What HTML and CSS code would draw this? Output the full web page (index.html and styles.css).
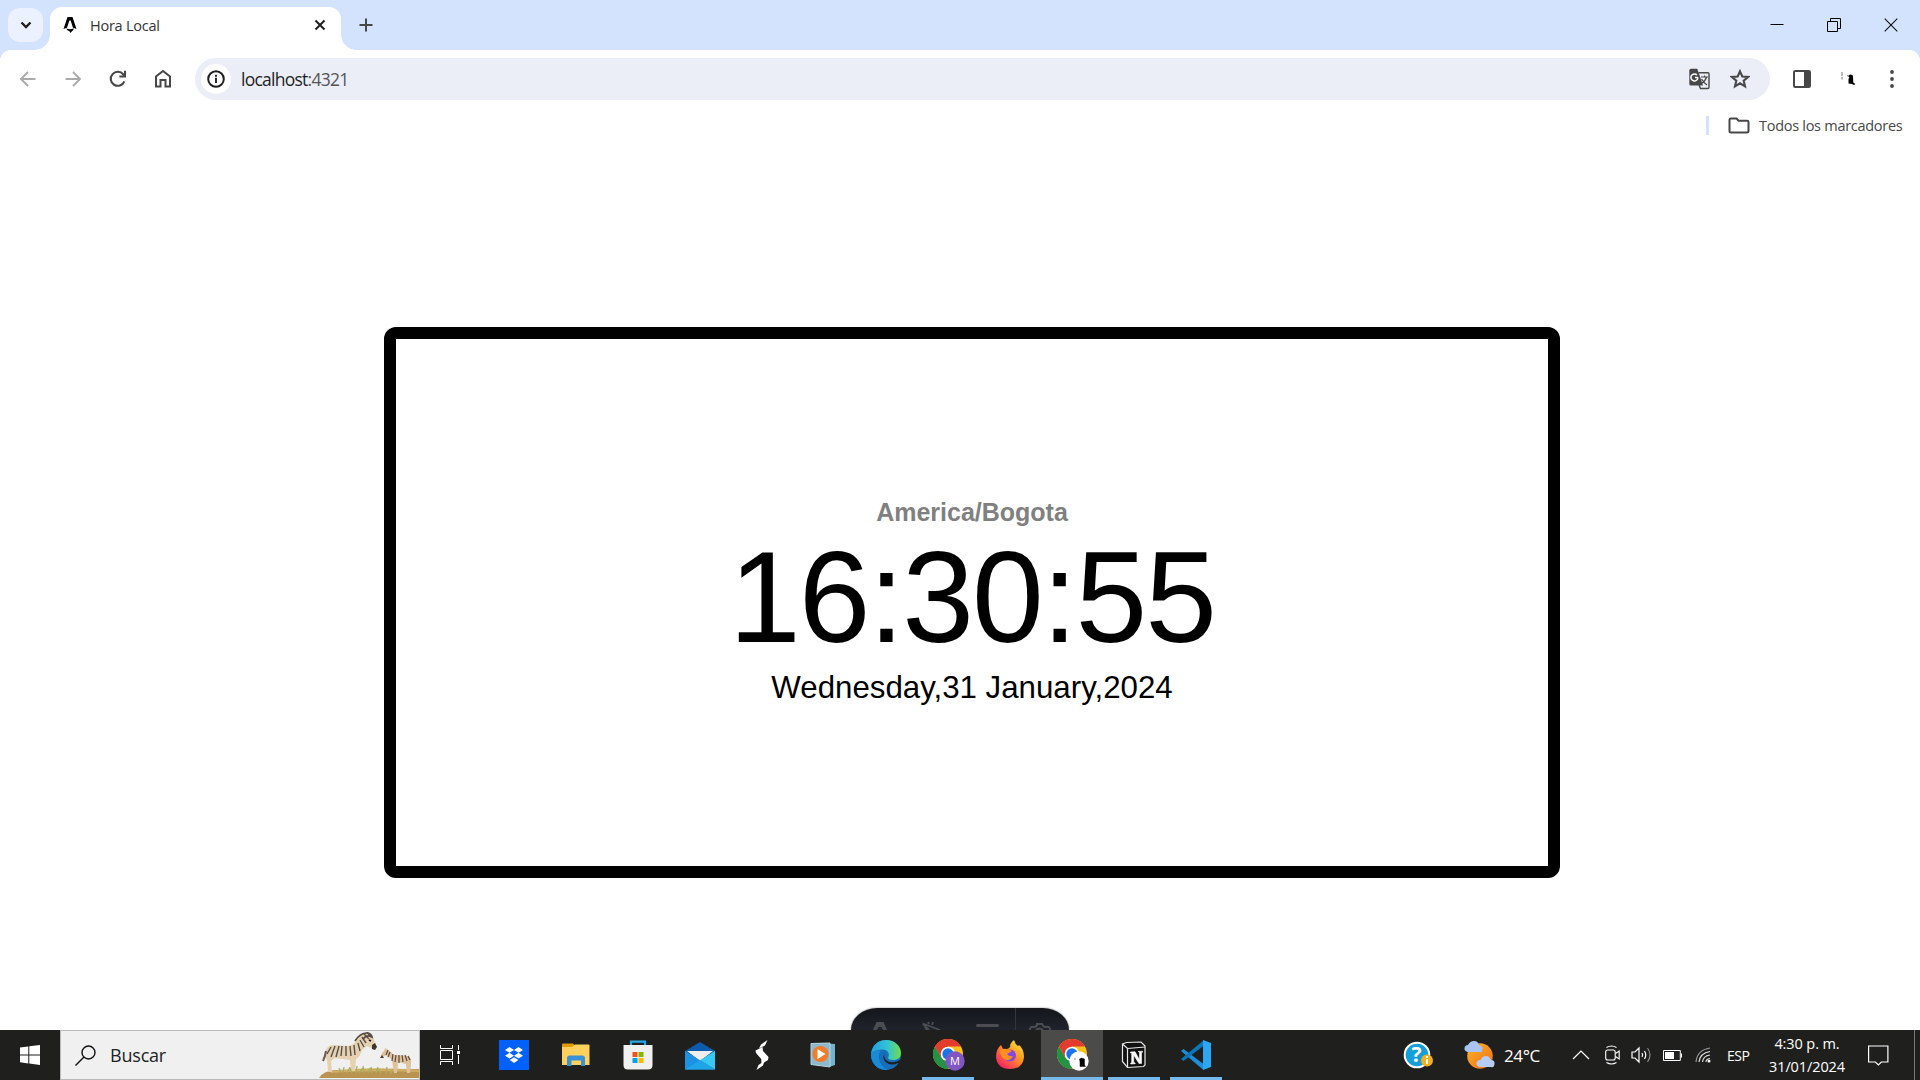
FILE: index.html
```html
<!DOCTYPE html>
<html lang="es">
<head>
<meta charset="utf-8">
<title>Hora Local</title>
<link rel="stylesheet" href="styles.css">
</head>
<body>
<div class="desktop">
  <header class="tabstrip">
    <div class="tab-search"><svg width="12" height="8" viewBox="0 0 12 8"><path d="M1.5 1.5 6 6l4.500-4.500" fill="none" stroke="#1f1f1f" stroke-width="2.300"/></svg></div>
    <div class="tab">
      <svg class="favicon" width="14" height="18" viewBox="0 0 14 18"><path d="M4.500 1h5l4 12q-2-1-3.500-1.300L7.600 4.500H6.400L4 11.700Q2.500 12 .5 13z"/><path d="M3.300 12.300q3.700 1.700 7.400 0 .2 2.500-2 3.200L7.500 17l-.8-1.500q-3-.5-3.400-3.200"/></svg>
      <span class="tab-title">Hora Local</span>
      <svg class="tab-close" width="12" height="12" viewBox="0 0 12 12"><path d="m1.500 1.500 9 9m0-9-9 9" stroke="#1f1f1f" stroke-width="2"/></svg>
    </div>
    <svg class="new-tab" width="14" height="14" viewBox="0 0 14 14"><path d="M7 .5v13M.5 7h13" stroke="#474747" stroke-width="2"/></svg>
    <div class="window-controls">
      <svg width="14" height="14" viewBox="0 0 14 14"><path d="M.5 6.500h13" stroke="#000"/></svg>
      <svg width="14" height="14" viewBox="0 0 14 14"><path d="M.5 3.500h10v10H.5zM3.500 3V.5h10v10H11" fill="none" stroke="#000"/></svg>
      <svg width="14" height="14" viewBox="0 0 14 14"><path d="m.7.700 12.600 12.600m0-12.600L.7 13.300" stroke="#111" stroke-width="1.100"/></svg>
    </div>
  </header>

  <nav class="toolbar">
    <div class="nav-buttons">
      <svg width="20" height="20" viewBox="0 0 20 20" fill="none" stroke="#ababab" stroke-width="1.900"><path d="M17.500 10H3.500M10 3 3 10l7 7"/></svg>
      <svg width="20" height="20" viewBox="0 0 20 20" fill="none" stroke="#ababab" stroke-width="1.900"><path d="M2.500 10h14M10 3l7 7-7 7"/></svg>
      <svg width="20" height="20" viewBox="0 0 20 20" fill="none" stroke="#474747" stroke-width="2.100"><path d="M16.300 12.300A7 7 0 1 1 15.300 5.500l1.700 1.700"/><path d="M17 1.800v5.700h-5.700"/></svg>
      <svg width="20" height="20" viewBox="0 0 20 20" fill="none" stroke="#474747" stroke-width="2"><path d="M3 17.500V7.500L10 2l7 5.500v10h-4.500V11h-5v6.500z"/></svg>
    </div>
    <div class="address">
      <div class="site-info"><svg width="18" height="18" viewBox="0 0 18 18"><circle cx="9" cy="9" r="7.800" fill="none" stroke="#1f1f1f" stroke-width="2"/><path d="M9 7.800v5.200M9 4.700v2" stroke="#1f1f1f" stroke-width="1.900"/></svg></div>
      <span class="url">localhost<i>:4321</i></span>
      <svg class="translate" width="21" height="22" viewBox="0 0 21 22"><path d="M2 .7h6.300L14 17.500H2Q.3 17.500.3 16V2.500Q.3.700 2 .7" fill="#474747"/><path d="M9.500 4.700h9.300q1.200 0 1.200 1.200v13.300q0 1.300-1.200 1.300h-7.300L10 17" fill="none" stroke="#474747" stroke-width="1.400"/><path d="M9 9.500H6M8.900 9.500A3.500 3.500 0 1 1 7.900 7" fill="none" stroke="#fff" stroke-width="1.500"/><path d="M12 9h7M15.500 7.500V9m2 0q-1 4-5 6.500m0-4.500q2 3.500 5.500 6" fill="none" stroke="#474747" stroke-width="1.200"/></svg>
      <svg width="20" height="20" viewBox="0 0 20 20"><path d="m10 2.300 2.300 5.200 5.700.5-4.300 3.700 1.300 5.600L10 14.300l-5 3 1.300-5.600L2 8l5.700-.5z" fill="none" stroke="#474747" stroke-width="2.100"/></svg>
    </div>
    <svg class="panel" width="18" height="18" viewBox="0 0 18 18"><rect x="1" y="1" width="16" height="16" rx="1.300" fill="none" stroke="#474747" stroke-width="2"/><path d="M11 1h6v16h-6z" fill="#474747"/></svg>
    <svg class="profile" width="16" height="18" viewBox="0 0 16 18"><path d="m8 6 2-1.500 2.500.5.500 2 .3 5.500 2 1.500-1.300 1-2-1-3.500-.5V9l.8-1.500z"/><path d="M2 7v2.500M2 2v4M7.500 5l1 2" stroke="#777"/></svg>
    <svg class="menu" width="4" height="18" viewBox="0 0 4 18" fill="#474747"><circle cx="2" cy="2" r="1.900"/><circle cx="2" cy="9" r="1.900"/><circle cx="2" cy="16" r="1.900"/></svg>
  </nav>

  <div class="bookmarks">
    <span class="divider"></span>
    <svg width="22" height="17" viewBox="0 0 22 17"><path d="M2.800 1.500h5.700l2 2.200h8.700q1.300 0 1.300 1.300v9q0 1.500-1.500 1.500H3q-1.500 0-1.500-1.500V2.800q0-1.300 1.300-1.300" fill="none" stroke="#474747" stroke-width="2"/></svg>
    <span class="bookmarks-label">Todos los marcadores</span>
  </div>

  <main class="page">
    <section class="clock">
      <h1 class="zone">America/Bogota</h1>
      <p class="time">16:30:55</p>
      <p class="date">Wednesday,31 January,2024</p>
    </section>
    <div class="devbar">
      <svg width="218" height="22" viewBox="0 0 218 22"><path d="m22 22 3.500-8h7l3.500 8h-4l-1.500-3h-3L26 22z" fill="#4b4d52"/><path d="M78 22 73 17h3l-3-1 3 7m-3-7 16 6M77 14l1 2m4-2-1 3" fill="none" stroke="#4b4d52" stroke-width="1.800"/><rect x="125" y="16" width="23" height="3" rx="1.500" fill="#4b4d52"/><path d="M164.500 0v22" stroke="#34363c"/><path d="M179 22q0-4 4-3 3 0 3-3h5q1 3 4 3 4-1 4 3m-14 0q3-3 7 0" fill="none" stroke="#4b4d52" stroke-width="2"/></svg>
    </div>
  </main>

  <footer class="taskbar">
    <div class="start"><svg width="20" height="20" viewBox="0 0 20 20" fill="#fff"><path d="M0 2.600 8.300 1.500v7.900H0zM9.300 1.300 20 0v9.400H9.300zM0 10.400h8.300v8L0 17.300zM9.300 10.400H20V20L9.300 18.600z"/></svg></div>
    <div class="search">
      <svg width="21" height="21" viewBox="0 0 21 21" fill="none" stroke="#111" stroke-width="1.400"><circle cx="13.500" cy="7.500" r="6.500"/><path d="m9 12-8.500 8.500"/></svg>
      <span class="search-label">Buscar</span>
      <svg class="zebras" width="100" height="46" viewBox="0 0 100 46">
        <path d="M0 46q4-7 16-8l84-1v9z" fill="#b99350"/><path d="M12 39q40-5 88-1v2q-50-2-88 1z" fill="#d1ad62"/>
        <path d="M7 18q2-5 8-5l14 1q6-1 9-6 4-6 9-7 6 0 8 7l3 7-4 2-6-3-5 4q-2 7-6 9l-1 12h-4l-1-11-15-2-4 3 1 11H9l-1-12q-3-5-1-10" fill="#e5d0b0"/>
        <path d="M7 19q-1 6-3 10" stroke="#6a5a4f" stroke-width="2" fill="none"/>
        <path d="m12 15-4 7m8-8-4 11m8-11-3 11m6-11-1 10m5-10v10m4-10 1 10m3-11 1 10m3-12 2 8m0-11 4 7m-2-10 4 6m-2-9 5 5m-2-7 4 5" stroke="#55514b" stroke-width="1.400" fill="none"/>
        <path d="M36 9Q41 1 48 1q4 0 5 4-5-3-9 2" fill="none" stroke="#554b43" stroke-width="1.700"/><path d="m53 13 3-2 2 4-2 3-3-1z" fill="#3d3530"/><path d="m50 8 2 1" stroke="#111" stroke-width="1.500"/>
        <path d="M62 26q-1-3 3-7l1-3 3 2q3 2 6 5l13 1q5 1 4 8l-1 9h-3l-1-9-8-2-1 11h-3l-2-13-5-5-5 2z" fill="#dfc19c"/><path d="m69 18-2 5m4-3-2 5m5-3-1 7m4-6-1 7m4-7v8m3-8 1 7m2-7 2 6m1-5 2 4" stroke="#5b493d" stroke-width="1.200"/><path d="m61 26 2-3 2 3z" fill="#4a3a31"/>
        <path d="m22 40-2-4m4 5 1-6m3 6 3-6m2 6-2-5m6 5 1-7m2 7 4-5m1 5-1-7m5 7 2-5m2 5-1-6m5 6 2-6m3 6-3-4m8 5 1-7m3 7 3-5" stroke="#a9ad62" stroke-width="1.300" fill="none"/>
      </svg>
    </div>
    <div class="apps">
      <div class="app task-view"><svg width="20" height="20" viewBox="0 0 20 20" fill="none" stroke="#fff"><path d="M.5 5.500h12v9H.5zM.5 0v3.500h12V0M.5 20v-3.500h12V20M18.500 0v5M18.500 10v9"/><path d="M17 6h3v3h-3z" fill="#fff" stroke="none"/></svg></div>
      <div class="app"><svg width="30" height="30" viewBox="0 0 30 30"><path fill="#0061fe" d="M0 0h30v30H0z"/><path d="m10.500 7 4.500 2.900-4.500 2.900L6 9.900zm9 0L24 9.900l-4.500 2.900L15 9.900zm-9 5.800L15 15.700l-4.500 2.900L6 15.700zm9 0 4.500 2.900-4.500 2.900-4.500-2.900zM15 17.300l4.300 2.800L15 23l-4.300-2.900z" fill="#fff"/></svg></div>
      <div class="app"><svg width="28" height="24" viewBox="0 0 28 24"><path d="M0 1.500Q0 .5 1 .5h10l2 2-2 3H0z" fill="#dc9d08"/><path d="M0 4h10l3-2.500h13.500q1 0 1 1V22H0z" fill="#ffd15c"/><path d="M5 23v-8q0-2.500 2.500-2.500h13Q23 12.500 23 15v8h-4v-5.500H9.500V23z" fill="#3b91d5"/></svg></div>
      <div class="app"><svg width="30" height="30" viewBox="0 0 30 30"><path d="M8 7V1.700h14V7" fill="none" stroke="#28a8ea" stroke-width="2.200"/><path d="M.5 5h29v20q0 4.500-4.500 4.500H5Q.5 29.500.5 25z" fill="#f0f0f0"/><path fill="#f25022" d="M9.500 12h5v5h-5z"/><path fill="#7fba00" d="M15.500 12h5v5h-5z"/><path fill="#00a4ef" d="M9.500 18h5v5h-5z"/><path fill="#ffb900" d="M15.500 18h5v5h-5z"/></svg></div>
      <div class="app"><svg width="30" height="29" viewBox="0 0 30 29"><path d="M0 10 15 1l15 9v6H0z" fill="#0d5bab"/><path d="M2 10h26L15 20z" fill="#eee"/><path d="m0 10 30 18.500H0z" fill="#1e92e2"/><path d="m30 10-15 9.300 15 9.200z" fill="#38c8f4"/><path d="m0 28.500 15-9.200 15 9.200z" fill="#20a4e8"/></svg></div>
      <div class="app"><svg width="16" height="30" viewBox="0 0 16 30" fill="#fff"><path d="m1.500 10.500 7-3.500.5 4 5.500 6-.5 3-6.500 4-.3-5-5.200-6z"/><path d="M13.500 0 7 4.500l-2 4 6-3zM2.500 30 9 25.500l1.500-4.500-6 4z"/></svg></div>
      <div class="app shifted"><svg width="26" height="26" viewBox="0 0 26 26"><path d="m5 1 20 1v21l-6 2z" fill="#76b3ca"/><path d="m1 1.500 19-.5v24L1 22.500z" fill="#8fb9cb" stroke="#b1d5e2"/><circle cx="10.500" cy="12" r="8" fill="#f47b27"/><path d="m7.500 7 8 5-8 5z" fill="#fff"/></svg></div>
      <div class="app"><svg width="30" height="30" viewBox="0 0 30 30"><defs><linearGradient id="edgeTop"><stop stop-color="#239ee0"/><stop offset=".55" stop-color="#32c4d4"/><stop offset="1" stop-color="#6ddd4c"/></linearGradient></defs><circle cx="15" cy="15" r="15" fill="#176eb9"/><path d="M0 14C1 5 7 0 15 0c9 0 15 6 15 13 0 5-4 7-7.500 7-4 0-6.500-1.500-5-3.500 1-2 0-7-6-7Q3 9.500 0 14" fill="url(#edgeTop)"/><path d="M0 14q4-5 10-3.500-3 3-2 8 1 8 9 11.300Q8 31 3 24q-3-4-3-10" fill="#188bd7"/><path d="M14 13.500q-2 3 1 6.500 4 4 12 1l3-2v4l-3 0q-6 3-11 0-4-3-3.500-7z" fill="#1f1f1f"/></svg></div>
      <div class="app open"><svg class="chrome" width="32" height="32" viewBox="-15 -15 32 32"><g id="chrome"><circle r="15" fill="#fbc116"/><path d="M-13-7.500A15 15 0 0 1 13-7.500H0L-6.500 4z" fill="#e33b2e"/><path d="M-13-7.500A15 15 0 0 0 0 15L6.500 3.800Q1 9-6.500 4z" fill="#229342"/><circle r="7.300" fill="#fff"/><circle r="5.700" fill="#1a73e8"/></g><circle cx="7" cy="7" r="9.700" fill="#7e57c2"/><text class="badge" x="7" y="11">M</text></svg></div>
      <div class="app"><svg width="30" height="30" viewBox="0 0 30 30"><defs><linearGradient id="fox" x1="1" y1="0" x2=".2" y2="1"><stop stop-color="#fff44f"/><stop offset=".45" stop-color="#ff9a1e"/><stop offset="1" stop-color="#f31a6c"/></linearGradient></defs><path d="M1 17Q1 9 6 5l2 4 4 0Q16 8 15 5q1-3 4-5 1 4 4 6l1-1q5 4 5 12-1 12-14 12T1 17" fill="url(#fox)"/><circle cx="15" cy="15.500" r="6" fill="#8745e1"/><path d="M5 10q5-3 12 1l-5 3q2 3 6 2-3 6-9 3-4-3-4-9" fill="#ff8f1e"/></svg></div>
      <div class="app open active"><svg class="chrome" width="32" height="32" viewBox="-15 -15 32 32"><use href="#chrome"/><circle cx="7" cy="7" r="9.700" fill="#fff"/><path d="m7.500 5 2-1 3 1v6l1 1.500H8V8zM3 4v2" stroke="#111" stroke-width=".5"/></svg></div>
      <div class="app open"><svg width="26" height="28" viewBox="0 0 26 28"><path d="m1.500 3 4-1.500L20 1l4 4v19l-1.500 1.500-16 1-5-6z" fill="#111" stroke="#e8e8e8" stroke-width="1.200"/><path d="m1.500 3 5 4.500L24 6M6.500 7.500v19" fill="none" stroke="#e8e8e8" stroke-width="1.200"/><path d="m9.500 11 4.500-.3 4.500 8V11l-1.500-.5 4.500-.3v1l-1 .3v11h-2.500L12.700 14v7.500l1.500.5v.7l-4.500.3v-1l1-.3V12l-1.500-.3z" fill="#fff" stroke="#fff" stroke-width=".6"/></svg></div>
      <div class="app open"><svg width="30" height="30" viewBox="0 0 30 30"><path d="m0 11 2.500-2 20 15v6z" fill="#1c8fd8"/><path d="m0 19 2.500 2L23 5.500V0z" fill="#0878ba"/><path d="m22 0 8 3v24l-8 3z" fill="#2ca7f3"/></svg></div>
    </div>
    <div class="tray">
      <svg class="help" width="30" height="28" viewBox="0 0 30 28"><circle cx="14" cy="14" r="12.300" fill="#159fd8" stroke="#fff" stroke-width="2"/><text class="help-mark" x="13.500" y="21">?</text><circle cx="24" cy="19.500" r="6" fill="#f4af1f"/><path d="M24 18v5M24 15v2" stroke="#fff" stroke-width="2"/></svg>
      <svg class="weather" width="31" height="28" viewBox="0 0 31 28"><defs><linearGradient id="sun" x1="0" x2="1" y2="1"><stop stop-color="#ffb32a"/><stop offset="1" stop-color="#ed6d14"/></linearGradient></defs><circle cx="16" cy="15" r="12.800" fill="url(#sun)"/><path d="M4 11q-4-1-3.500-4T4 4q2-4 6-4t5 4q4 1 3.500 4.500T15 11z" fill="#a9c4f3"/><path d="M16 26q-4-1-3.500-4t4-3q2-4 5.500-4t5 4q4 0 3.500 4T27 26z" fill="#b5ccf7"/></svg>
      <span class="temp">24°C</span>
      <svg class="chevron" width="18" height="10" viewBox="0 0 18 10"><path d="m1 9 8-8 8 8" fill="none" stroke="#fff" stroke-width="1.200"/></svg>
      <svg class="meet" width="15" height="20" viewBox="0 0 15 20" fill="none" stroke="#fff" stroke-width="1.100"><rect x=".7" y="5" width="9.500" height="10" rx="2"/><path d="m10.500 8.500 3.700-2.500v8l-3.700-2.500M1.500 2.500q5-3 10 0M1.500 17.500q5 3 10 0"/></svg>
      <svg class="volume" width="21" height="18" viewBox="0 0 21 18" fill="none" stroke="#fff" stroke-width="1.200"><path d="M1 6h3l4-4v14l-4-4H1zM11 7q1.300 2 0 4"/><path d="M13.500 5q2.500 4 0 8"/><path d="M16.500 2q5 7 0 14" stroke="#888"/></svg>
      <svg class="battery" width="19" height="11" viewBox="0 0 19 11"><path d="M.5.500h16.800v10H.5zM18.500 3.500v4" fill="none" stroke="#fff"/><path d="M2 2h9v7H2z" fill="#fff"/></svg>
      <svg class="wifi" width="16" height="16" viewBox="0 0 16 16" fill="none" stroke="#ddd" stroke-width="1.200"><path d="M1 15Q2 3 15 1" stroke="#999"/><path d="M4 15Q5 6 15 4.500M7.500 15Q8 9 15 8M11 15q0-3 4-3.500"/><circle cx="14" cy="14" r="1.500" fill="#fff" stroke="none"/></svg>
      <span class="lang">ESP</span>
      <div class="datetime"><span class="hour">4:30 p. m.</span><span class="day">31/01/2024</span></div>
      <svg class="notify" width="21" height="21" viewBox="0 0 21 21"><path d="M.6 1h19.300v16h-6.500l-3 3-3-3H.6z" fill="none" stroke="#fff" stroke-width="1.200"/></svg>
      <span class="peek"></span>
    </div>
  </footer>
</div>
</body>
</html>
```
FILE: styles.css
```css
* { box-sizing: border-box; }
body { margin: 0; overflow: hidden; background: #fff; font-family: "Open Sans", "Noto Sans", sans-serif; }
svg { display: block; flex: none; }
span { white-space: nowrap; }

.desktop { width: 1920px; height: 1080px; display: flex; flex-direction: column; }

/* tab strip */
.tabstrip { height: 50px; background: #d3e3fd; display: flex; align-items: flex-start; padding: 8px 22px 0 8px; }
.tab-search { width: 35px; height: 34px; border-radius: 12px; background: #ebf1fe; display: flex; align-items: center; justify-content: center; }
.tab { position: relative; width: 291px; height: 43px; margin: -1px 0 0 7px; padding: 0 15px 7px 13px; border-radius: 12px 12px 0 0; background: #fff; display: flex; align-items: center; }
.tab::before, .tab::after { content: ""; position: absolute; bottom: 0; width: 15px; height: 15px; }
.tab::before { left: -15px; background: radial-gradient(circle at 0 0, transparent 14.500px, #fff 15px); }
.tab::after { right: -15px; background: radial-gradient(circle at 100% 0, transparent 14.500px, #fff 15px); }
.tab-title { margin-left: 13px; flex: 1; font-size: 14.500px; letter-spacing: -.25px; color: #333; }
.new-tab { margin: 10px 0 0 18px; }
.window-controls { margin-left: auto; display: flex; gap: 43px; padding-top: 10px; }

/* toolbar */
.toolbar { height: 58px; display: flex; align-items: center; background: radial-gradient(circle at 10px 10px, #fff 9.500px, #d3e3fd 10px) 0 0 / 10px 10px no-repeat, radial-gradient(circle at 0 10px, #fff 9.500px, #d3e3fd 10px) 100% 0 / 10px 10px no-repeat, #fff; padding: 0 26px 0 18px; }
.nav-buttons { display: flex; gap: 25px; }
.address { width: 1575px; height: 42px; margin-left: 22px; border-radius: 21px; background: #ebeef7; display: flex; align-items: center; padding: 0 20px 0 6px; }
.site-info { width: 30px; height: 30px; border-radius: 50%; background: #fff; display: flex; align-items: center; justify-content: center; }
.url { flex: 1; margin-left: 10px; font-size: 17.500px; color: #1f1f1f; letter-spacing: -.75px; }
.url i { font-style: normal; color: #555; }
.translate { margin-right: 20px; }
.panel { margin-left: 23px; }
.profile { margin-left: 29px; }
.menu { margin-left: auto; }

/* bookmarks */
.bookmarks { height: 35px; display: flex; align-items: center; justify-content: flex-end; padding: 0 17px 0 0; }
.divider { width: 3px; height: 19px; background: #d3e3fd; margin-right: 19px; }
.bookmarks-label { margin-left: 9px; font-size: 14.500px; color: #474747; width: 144px; letter-spacing: -.28px; }

/* page */
.page { flex: 1; position: relative; padding: 184px 0 0 384px; font-family: "Liberation Sans", Arial, sans-serif; }
.clock { width: 1176px; height: 551px; border: 12px solid #000; border-radius: 12px; display: flex; flex-direction: column; align-items: center; padding-top: 159px; }
.clock > * { margin: 0; }
.zone { font-size: 25px; line-height: 29px; color: #808080; }
.time { font-size: 129px; line-height: 141px; letter-spacing: -2px; color: #000; }
.clock .date { margin-top: 2px; font-size: 31.250px; line-height: 36px; color: #000; }
.devbar { position: absolute; left: 851px; bottom: 0; width: 218px; height: 22px; border-radius: 26px 26px 0 0 / 22px 22px 0 0; background: linear-gradient(#14161c, #20232b); box-shadow: 0 0 2px #777; overflow: hidden; }

/* taskbar */
.taskbar { position: relative; height: 50px; background: #1f1f1e; color: #fff; display: flex; }
.start { width: 60px; display: flex; align-items: center; justify-content: center; }
.search { width: 360px; background: #f0f0f0; border: 1px solid #b9b9b9; display: flex; align-items: center; padding-left: 14px; }
.search-label { margin-left: 14px; font-size: 18px; letter-spacing: -.2px; color: #222; }
.zebras { margin-left: auto; }
.apps { display: flex; }
.app { width: 62px; height: 50px; display: flex; align-items: center; justify-content: center; border: solid transparent; border-width: 0 5px; }
.task-view { width: 63px; padding-right: 3px; }
.shifted { padding-right: 2px; }
.chrome { margin-left: 2px; }
.open { background: linear-gradient(#76b9ed, #76b9ed) 0 100% / 100% 3px no-repeat padding-box; }
.active { border-width: 0; background: linear-gradient(#76b9ed, #76b9ed) 0 100% / 100% 3px no-repeat, #4b4b4a; }
.badge { font-size: 11px; fill: #fff; text-anchor: middle; }
.help-mark { font-size: 21px; font-weight: 700; fill: #fff; text-anchor: middle; }
.tray { margin-left: auto; display: flex; align-items: center; }
.weather { margin-left: 31px; }
.temp { margin-left: 9px; width: 40px; font-size: 17px; letter-spacing: -.4px; }
.chevron { margin-left: 28px; }
.meet { margin-left: 15px; }
.volume { margin-left: 11px; }
.battery { margin-left: 11px; }
.wifi { margin-left: 13px; }
.lang { margin-left: 16px; width: 25px; font-size: 14px; letter-spacing: -.5px; }
.datetime { width: 80px; margin-left: 15px; display: flex; flex-direction: column; align-items: center; font-size: 14.500px; line-height: 23px; letter-spacing: -.1px; }
.notify { margin-left: 21px; }
.peek { width: 1px; height: 50px; background: #777; margin: 0 5px 0 25px; }
```
